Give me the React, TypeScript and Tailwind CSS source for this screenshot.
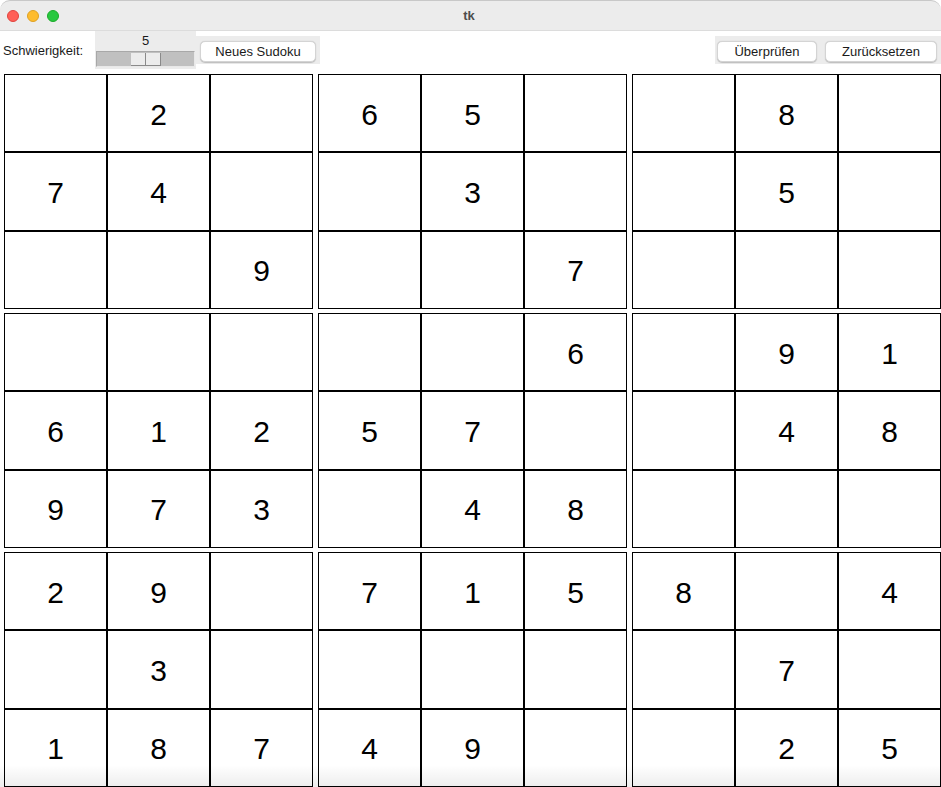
import React from "react";

const grid: (number | null)[][] = [
  [null, 2, null, 6, 5, null, null, 8, null],
  [7, 4, null, null, 3, null, null, 5, null],
  [null, null, 9, null, null, 7, null, null, null],
  [null, null, null, null, null, 6, null, 9, 1],
  [6, 1, 2, 5, 7, null, null, 4, 8],
  [9, 7, 3, null, 4, 8, null, null, null],
  [2, 9, null, 7, 1, 5, 8, null, 4],
  [null, 3, null, null, null, null, null, 7, null],
  [1, 8, 7, 4, 9, null, null, 2, 5],
];

function Block({ br, bc }: { br: number; bc: number }) {
  const cells = [];
  for (let r = 0; r < 3; r++) {
    for (let c = 0; c < 3; c++) {
      const v = grid[br * 3 + r][bc * 3 + c];
      cells.push(
        <div
          key={`${r}-${c}`}
          className="border border-black bg-white flex items-center justify-center pt-[3px] text-[30px] text-black leading-none"
        >
          {v ?? ""}
        </div>
      );
    }
  }
  return <div className="grid grid-cols-3 grid-rows-3 w-[309px] h-[235px]">{cells}</div>;
}

function MacButton({ label, w }: { label: string; w: string }) {
  return (
    <div
      className={`${w} h-[21px] bg-white rounded-[5px] border border-[#d4d4d4] shadow-[0_0.5px_1px_rgba(0,0,0,0.2)] flex items-center justify-center text-[13px] text-[#1a1a1a]`}
    >
      {label}
    </div>
  );
}

export default function App() {
  return (
    <div
      className="relative w-[941px] h-[787px] overflow-hidden bg-white"
      style={{ fontFamily: '"Liberation Sans", Arial, sans-serif' }}
    >
      {/* title bar */}
      <div className="relative h-[31px] bg-[#ececec] border-t border-[#c8c8c8] rounded-t-[10px] border-b border-b-[#dcdcdc] flex items-center">
        <div className="flex items-center gap-[8px] pl-[7px]">
          <div className="w-[12px] h-[12px] rounded-full bg-[#ff5f57] border border-[#e0443e]" />
          <div className="w-[12px] h-[12px] rounded-full bg-[#febc2e] border border-[#dea123]" />
          <div className="w-[12px] h-[12px] rounded-full bg-[#28c840] border border-[#1aab29]" />
        </div>
        <div className="absolute left-0 right-0 top-0 bottom-0 flex items-center justify-center pr-[3px] text-[13px] font-bold text-[#4d4d4d]">
          tk
        </div>
      </div>

      {/* toolbar */}
      <div className="flex h-[43px] items-start">
        <div className="w-[95px] h-[38px] pl-[3px] flex items-center pt-[1px] text-[13px] text-[#1a1a1a]">
          Schwierigkeit:
        </div>
        <div className="w-[101px] h-[38px] bg-[#ececec] flex flex-col items-center">
          <div className="h-[20px] flex items-center text-[13px] text-[#1a1a1a]">5</div>
          <div className="w-[99px] h-[16px] bg-[#c0c0c0] border-l border-t border-[#a8a8a8] border-r border-b border-r-[#e8e8e8] border-b-[#e8e8e8] relative">
            <div className="absolute left-[34px] top-[1px] w-[30px] h-[13px] flex">
              <div className="w-[15px] h-full bg-[#ececec] border-r border-b border-[#8a8a8a]" />
              <div className="w-[15px] h-full bg-[#ececec] border-r border-b border-[#8a8a8a]" />
            </div>
          </div>
        </div>
        <div className="w-[124px] h-[28px] mt-[5px] bg-[#ececec] pl-[4px] pt-[5px]">
          <MacButton label="Neues Sudoku" w="w-[116px]" />
        </div>
        <div className="ml-auto w-[226px] h-[28px] mt-[5px] bg-[#ececec] pl-[2px] pt-[5px] flex gap-[8px]">
          <MacButton label="Überprüfen" w="w-[100px]" />
          <MacButton label="Zurücksetzen" w="w-[112px]" />
        </div>
      </div>

      {/* sudoku */}
      <div className="grid grid-cols-[309px_309px_309px] gap-x-[5px] gap-y-[4px] pl-[4px]">
        {[0, 1, 2].map((br) =>
          [0, 1, 2].map((bc) => <Block key={`${br}-${bc}`} br={br} bc={bc} />)
        )}
      </div>

      <div className="pointer-events-none absolute left-0 right-0 bottom-0 h-[22px] bg-gradient-to-b from-transparent to-[rgba(0,0,0,0.07)]" />
    </div>
  );
}
